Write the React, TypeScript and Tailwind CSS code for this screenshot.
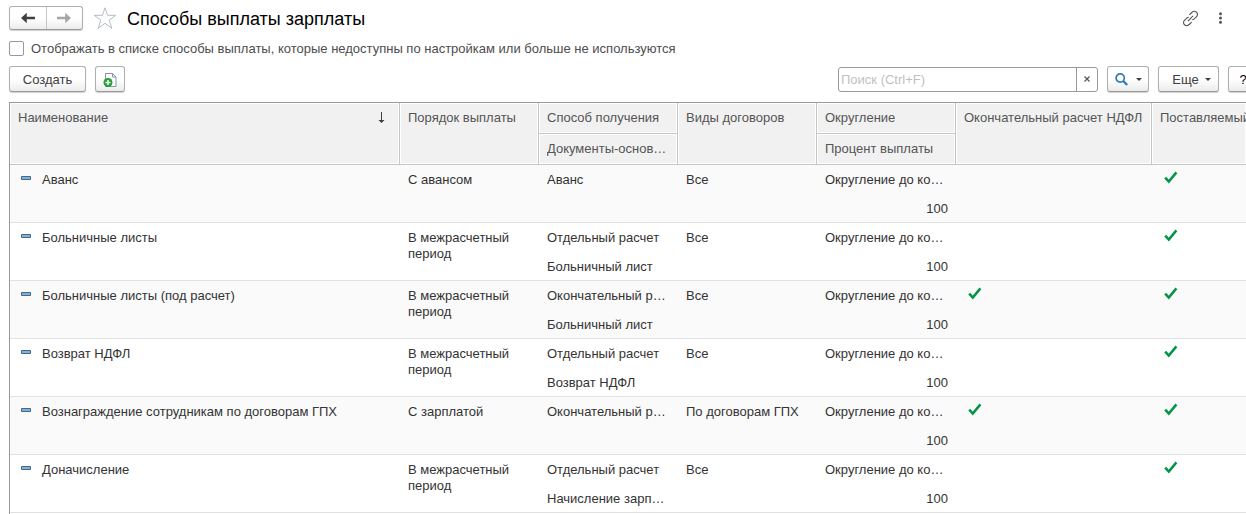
import type { ReactNode } from "react";

type PayMethod = {
  name: string;
  order: string;
  way: string;
  basis: string;
  contracts: string;
  finalTax: boolean;
};

const rows: PayMethod[] = [
  { name: "Аванс", order: "С авансом", way: "Аванс", basis: "", contracts: "Все", finalTax: false },
  { name: "Больничные листы", order: "В межрасчетный период", way: "Отдельный расчет", basis: "Больничный лист", contracts: "Все", finalTax: false },
  { name: "Больничные листы (под расчет)", order: "В межрасчетный период", way: "Окончательный расчет", basis: "Больничный лист", contracts: "Все", finalTax: true },
  { name: "Возврат НДФЛ", order: "В межрасчетный период", way: "Отдельный расчет", basis: "Возврат НДФЛ", contracts: "Все", finalTax: false },
  { name: "Вознаграждение сотрудникам по договорам ГПХ", order: "С зарплатой", way: "Окончательный расчет", basis: "", contracts: "По договорам ГПХ", finalTax: true },
  { name: "Доначисление", order: "В межрасчетный период", way: "Отдельный расчет", basis: "Начисление зарплаты", contracts: "Все", finalTax: false },
];

const button =
  "flex h-[26px] shrink-0 items-center justify-center rounded-[3px] border border-[#b0b0b0] border-b-[#999] bg-linear-to-b from-white from-50% to-[#ececec] pt-px text-[#404040] shadow-[0_1px_1px_#d0d0d0]";

const headCell =
  "h-[31px] border-r border-b border-[#c6c6c6] bg-[#f1f1f1] px-2 pt-[7px] text-left align-top font-normal leading-4 whitespace-nowrap text-[#555] shadow-[inset_0_0_0_1px_#fff]";

function Arrow({ flip, color }: { flip?: boolean; color: string }) {
  return (
    <svg width="16" height="12" viewBox="0 0 16 12" className={flip ? "rotate-180" : ""} aria-hidden="true">
      <path d="M1 6 6.8.8V4.8H15v2.4H6.8v4Z" fill={color} />
    </svg>
  );
}

function Caret() {
  return (
    <svg width="6" height="3" viewBox="0 0 6 3" aria-hidden="true">
      <path d="M0 0h6L3 3Z" fill="#404040" />
    </svg>
  );
}

function Check() {
  return (
    <svg width="14" height="13" viewBox="0 0 14 13" role="img" aria-label="Да">
      <path d="M1.2 6.6 4.8 10.6 12.4 1.4" fill="none" stroke="#009646" strokeWidth="2.5" />
    </svg>
  );
}

function Cell({ children }: { children?: ReactNode }) {
  return (
    <td className="h-[58px] border-b border-[#e2e2e2] px-2 pt-[7px] align-top leading-4">{children}</td>
  );
}

function CheckCell({ on }: { on: boolean }) {
  return (
    <td className="h-[58px] border-b border-[#e2e2e2] px-3 pt-[6px] align-top">{on && <Check />}</td>
  );
}

export default function App() {
  return (
    <main className="flex min-h-screen flex-col overflow-hidden bg-white pl-[9px] font-['Liberation_Sans',Arial,sans-serif] text-[13px] text-[#333]">
      <header className="flex h-9 items-center">
        <div className="flex h-6 w-[74px] overflow-hidden rounded-[3px] border border-[#b0b0b0] border-b-[#999] bg-linear-to-b from-white from-50% to-[#ececec] shadow-[0_1px_1px_#d0d0d0]">
          <button type="button" aria-label="Назад" className="flex flex-1 items-center justify-center border-r border-[#c6c6c6]">
            <Arrow color="#404040" />
          </button>
          <button type="button" aria-label="Вперед" className="flex flex-1 items-center justify-center">
            <Arrow flip color="#a6a6a6" />
          </button>
        </div>
        <button type="button" aria-label="Добавить в избранное" className="ml-[10px]">
          <svg width="24" height="24" viewBox="0 0 24 24" aria-hidden="true">
            <path d="m12 1.8 2.6 7.5h8.2l-6.6 4.9 2.6 8.1-6.8-5-6.8 5 2.6-8.1-6.6-4.9h8.2Z" fill="#fff" stroke="#b4bcc4" />
          </svg>
        </button>
        <h1 className="ml-[10px] pt-px text-lg leading-6 text-black">Способы выплаты зарплаты</h1>
        <button type="button" aria-label="Получить ссылку" className="ml-auto">
          <svg width="17" height="17" viewBox="0 0 18 18" fill="none" stroke="#555" strokeWidth="1.2" aria-hidden="true">
            <path d="m6.3 11.7 5.4-5.4M7.8 5.2l2.8-2.8a3.2 3.2 0 0 1 4.8 0 3.2 3.2 0 0 1 0 4.6l-2.9 2.9-1.6.4M7.1 7.7l-1.6.4L2.6 11a3.2 3.2 0 0 0 0 4.6 3.2 3.2 0 0 0 4.8 0l2.8-2.8" />
          </svg>
        </button>
        <button type="button" aria-label="Другие действия" className="mr-[23px] ml-[19px]">
          <svg width="5" height="12" viewBox="0 0 5 12" fill="#555" aria-hidden="true">
            <circle cx="2.5" cy="1.8" r="1.5" />
            <circle cx="2.5" cy="6" r="1.5" />
            <circle cx="2.5" cy="10.2" r="1.5" />
          </svg>
        </button>
      </header>

      <label className="flex h-6 items-center gap-[7px] text-[#4d4d4d]">
        <input type="checkbox" className="size-[15px] shrink-0 appearance-none rounded-[2px] border border-[#999] bg-white checked:bg-[#009646]" />
        <span className="pt-px">Отображать в списке способы выплаты, которые недоступны по настройкам или больше не используются</span>
      </label>

      <div className="flex h-[42px] items-center pb-[4px]">
        <button type="button" className={`${button} w-[77px]`}>Создать</button>
        <button type="button" aria-label="Создать копированием" className={`${button} ml-[9px] w-[30px]`}>
          <svg width="14" height="16" viewBox="0 0 14 16" aria-hidden="true">
            <path d="M2.5 1.5h7l3.5 3.5v9.5h-10.5Z" fill="#fff" stroke="#8595a5" />
            <path d="M9.5 1.5V5H13" fill="none" stroke="#8595a5" />
            <circle cx="5" cy="10.5" r="4.5" fill="#25a038" />
            <path d="M5 8v5M2.5 10.5h5" stroke="#fff" strokeWidth="1.4" />
          </svg>
        </button>
        <div className="ml-auto flex h-[25px] w-[260px] overflow-hidden rounded-[3px] border border-[#999]">
          <input
            type="text"
            aria-label="Поиск"
            placeholder="Поиск (Ctrl+F)"
            className="min-w-0 flex-1 px-[2px] pt-px outline-none placeholder:text-[#bfbfc4]"
          />
          <button type="button" aria-label="Очистить" className="flex w-[21px] items-center justify-center border-l border-[#999]">
            <svg width="6" height="6" viewBox="0 0 6 6" aria-hidden="true">
              <path d="m.5.5 5 5m0-5-5 5" stroke="#555" strokeWidth="1.2" />
            </svg>
          </button>
        </div>
        <button type="button" aria-label="Найти" className={`${button} ml-[9px] w-[42px] gap-2`}>
          <svg width="13" height="13" viewBox="0 0 13 13" fill="none" stroke="#2e7bb4" aria-hidden="true">
            <circle cx="5.2" cy="5" r="4.1" strokeWidth="1.7" />
            <path d="m8.2 8 4 4" strokeWidth="2.3" />
          </svg>
          <Caret />
        </button>
        <button type="button" className={`${button} ml-[9px] w-[61px] gap-[6px] pl-[6px]`}>
          Еще
          <Caret />
        </button>
        <button type="button" aria-label="Справка" className={`${button} -mr-[12px] ml-[9px] w-[30px] text-black`}>?</button>
      </div>

      <div className="flex-1 overflow-hidden border-t border-l border-[#999]">
        <table className="w-full table-fixed border-separate border-spacing-0">
          <colgroup>
            <col />
            <col className="w-[139px]" />
            <col className="w-[139px]" />
            <col className="w-[139px]" />
            <col className="w-[139px]" />
            <col className="w-[196px]" />
            <col className="w-[94px]" />
          </colgroup>
          <thead>
            <tr>
              <th rowSpan={2} className={headCell}>
                <div className="flex items-start justify-between pr-[6px]">
                  Наименование
                  <svg width="7" height="16" viewBox="0 0 7 16" aria-hidden="true">
                    <path d="M3 2h1v8h2.5L3.5 13 .5 10H3Z" fill="#404040" />
                  </svg>
                </div>
              </th>
              <th rowSpan={2} className={headCell}>Порядок выплаты</th>
              <th className={headCell}>Способ получения</th>
              <th rowSpan={2} className={headCell}>Виды договоров</th>
              <th className={headCell}>Округление</th>
              <th rowSpan={2} className={headCell}>Окончательный расчет НДФЛ</th>
              <th rowSpan={2} className={`${headCell} overflow-hidden border-r-0`}>Поставляемый</th>
            </tr>
            <tr>
              <th className={headCell}>
                <div className="truncate">Документы-основания</div>
              </th>
              <th className={headCell}>Процент выплаты</th>
            </tr>
          </thead>
          <tbody>
            {rows.map((row) => (
              <tr key={row.name} className="odd:bg-[#fafafa]">
                <Cell>
                  <div className="flex gap-[11px] pl-[3px]">
                    <svg width="10" height="4" viewBox="0 0 10 4" className="mt-1 shrink-0" aria-hidden="true">
                      <path d="M.5.5h9v3h-9Z" fill="#7fb2d8" stroke="#46698a" />
                    </svg>
                    {row.name}
                  </div>
                </Cell>
                <Cell>{row.order}</Cell>
                <Cell>
                  <div className="grid gap-[13px]">
                    <div className="truncate">{row.way}</div>
                    <div className="truncate">{row.basis}</div>
                  </div>
                </Cell>
                <Cell>{row.contracts}</Cell>
                <Cell>
                  <div className="grid gap-[13px]">
                    <div className="truncate">Округление до копейки</div>
                    <div className="text-right">100</div>
                  </div>
                </Cell>
                <CheckCell on={row.finalTax} />
                <CheckCell on />
              </tr>
            ))}
          </tbody>
        </table>
      </div>
    </main>
  );
}
